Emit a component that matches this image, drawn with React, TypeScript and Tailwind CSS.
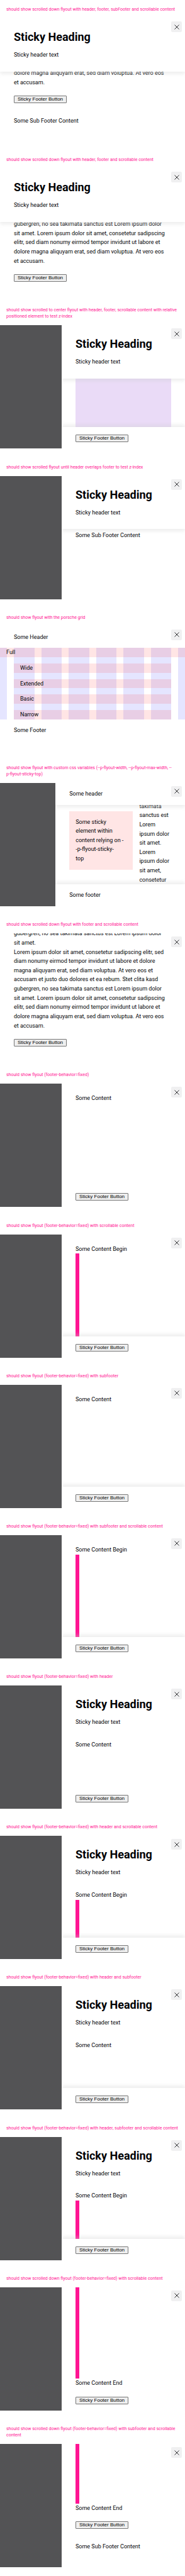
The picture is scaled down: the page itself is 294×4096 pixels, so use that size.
import type { ReactNode } from "react";
import clsx from "clsx";

type StageProps = {
  title: ReactNode;
  backdrop?: "none" | "third" | "custom";
  children: ReactNode;
};

function CloseButton() {
  return (
    <button
      type="button"
      aria-label="Dismiss flyout"
      className="absolute top-[5px] right-[5px] z-20 flex size-[17px] items-center justify-center rounded-[2px] bg-[#f0f0f1]"
    >
      <svg viewBox="0 0 8 8" className="size-2" fill="none" stroke="#010205" strokeWidth="0.8">
        <path d="M0.5 0.5 7.5 7.5M7.5 0.5 0.5 7.5" />
      </svg>
    </button>
  );
}

function Stage({ title, backdrop = "third", children }: StageProps) {
  return (
    <section className="pb-3.5">
      <h2 className="px-2.5 pt-2.5 pb-[9px] text-[7px] leading-[10px] whitespace-nowrap text-[#ff1493]">{title}</h2>
      <div className="flex h-49 overflow-hidden">
        {backdrop !== "none" && (
          <div className={clsx("shrink-0 bg-[#535355]", backdrop === "third" ? "w-1/3" : "w-3/10")} />
        )}
        <aside className="relative flex min-w-0 flex-1 flex-col overflow-hidden bg-white">
          <CloseButton />
          {children}
        </aside>
      </div>
    </section>
  );
}

function StickyHeader({ shadow = false }: { shadow?: boolean }) {
  return (
    <header
      className={clsx(
        "z-10 flex shrink-0 flex-col gap-2.5 bg-white px-[22px] py-[19px]",
        shadow && "shadow-[0_3px_6px_rgba(204,204,204,0.4)]",
      )}
    >
      <h3 className="text-[18px] leading-[22px] font-bold">Sticky Heading</h3>
      <p>Sticky header text</p>
    </header>
  );
}

function TextBar({ children, shadow = "none" }: { children: ReactNode; shadow?: "none" | "down" | "up" }) {
  return (
    <div
      className={clsx(
        "z-10 shrink-0 bg-white px-[22px] py-2.5",
        shadow === "down" && "shadow-[0_3px_6px_rgba(204,204,204,0.4)]",
        shadow === "up" && "shadow-[0_-3px_6px_rgba(204,204,204,0.4)]",
      )}
    >
      {children}
    </div>
  );
}

function StickyFooter({ shadow = false }: { shadow?: boolean }) {
  return (
    <footer
      className={clsx(
        "z-10 flex shrink-0 bg-white px-[22px] pt-3 pb-2.5",
        shadow && "shadow-[0_-3px_6px_rgba(204,204,204,0.4)]",
      )}
    >
      <button
        type="button"
        className="rounded-[1px] border border-[#767676] bg-[#efefef] px-[5px] font-['Liberation_Sans',Arial,sans-serif] text-[8px] leading-[10px] text-black"
      >
        Sticky Footer Button
      </button>
    </footer>
  );
}

function SubFooter() {
  return <div className="shrink-0 px-[22px] pt-[11px] pb-[25px]">Some Sub Footer Content</div>;
}

function ScrolledText({ lines }: { lines: string[] }) {
  return (
    <div className="flex min-h-0 flex-1 flex-col justify-end overflow-hidden px-[22px] pb-0.5 whitespace-nowrap">
      {lines.map((line, i) => (
        <p key={i}>{line}</p>
      ))}
    </div>
  );
}

function ContentBegin({ padded = false, bar = false }: { padded?: boolean; bar?: boolean }) {
  return (
    <div className={clsx("flex min-h-0 flex-1 flex-col px-[22px]", padded ? "pt-4" : "pt-0.5")}>
      <p>{bar ? "Some Content Begin" : "Some Content"}</p>
      {bar && <div className="w-1.5 flex-1 bg-[#ff1493]" />}
    </div>
  );
}

function ContentEnd() {
  return (
    <div className="flex min-h-0 flex-1 flex-col px-[22px] pb-0.5">
      <div className="w-1.5 flex-1 bg-[#ff1493]" />
      <p>Some Content End</p>
    </div>
  );
}

const lorem = [
  "gubergren, no sea takimata sanctus est Lorem ipsum dolor",
  "sit amet.",
  "Lorem ipsum dolor sit amet, consetetur sadipscing elitr, sed",
  "diam nonumy eirmod tempor invidunt ut labore et dolore",
  "magna aliquyam erat, sed diam voluptua. At vero eos et",
  "accusam et justo duo dolores et ea rebum. Stet clita kasd",
  "gubergren, no sea takimata sanctus est Lorem ipsum dolor",
  "sit amet. Lorem ipsum dolor sit amet, consetetur sadipscing",
  "elitr, sed diam nonumy eirmod tempor invidunt ut labore et",
  "dolore magna aliquyam erat, sed diam voluptua. At vero eos",
  "et accusam.",
];

const narrowLorem = [
  "takimata",
  "sanctus est",
  "Lorem",
  "ipsum dolor",
  "sit amet.",
  "Lorem",
  "ipsum dolor",
  "sit amet,",
  "consetetur",
];

const stickyNote = ["Some sticky", "element within", "content relying on -", "-p-flyout-sticky-", "top"];

function PorscheGrid() {
  return (
    <div className="grid shrink-0">
      <div className="col-start-1 row-start-1 flex gap-[11px]">
        <div className="w-[11px] bg-[#e5e5ff]" />
        {[1, 2, 3, 4, 5, 6].map((n) => (
          <div key={n} className="flex-1 bg-[#e5e5ff]" />
        ))}
        <div className="w-[11px] bg-[#e5e5ff]" />
      </div>
      <div className="col-start-1 row-start-1 flex flex-col gap-2.5">
        <p className="bg-[#ff0000]/10 px-2.5">Full</p>
        {["Wide", "Extended", "Basic", "Narrow"].map((name) => (
          <p key={name} className="mx-[22px] bg-[#ff0000]/10 px-2.5">
            {name}
          </p>
        ))}
      </div>
    </div>
  );
}

export default function App() {
  return (
    <main className="flex min-h-screen flex-col justify-between bg-white font-[Roboto,sans-serif] text-[9px] leading-relaxed text-[#010205]">
      <Stage
        backdrop="none"
        title="should show scrolled down flyout with header, footer, subFooter and scrollable content"
      >
        <StickyHeader shadow />
        <ScrolledText lines={lorem.slice(-2)} />
        <StickyFooter />
        <SubFooter />
      </Stage>

      <Stage backdrop="none" title="should show scrolled down flyout with header, footer and scrollable content">
        <StickyHeader shadow />
        <ScrolledText lines={lorem.slice(-5)} />
        <StickyFooter />
        <div className="h-1.5 shrink-0" />
      </Stage>

      <Stage
        title={
          <>
            should show scrolled to center flyout with header, footer, scrollable content with relative
            <br />
            positioned element to test z-index
          </>
        }
      >
        <StickyHeader shadow />
        <div className="mx-[22px] flex-1 bg-[#eadbf7]" />
        <StickyFooter shadow />
      </Stage>

      <Stage title="should show scrolled flyout until header overlaps footer to test z-index">
        <StickyHeader shadow />
        <p className="px-[22px] pt-[3px]">Some Sub Footer Content</p>
      </Stage>

      <Stage backdrop="none" title="should show flyout with the porsche grid">
        <TextBar>Some Header</TextBar>
        <PorscheGrid />
        <TextBar>Some Footer</TextBar>
      </Stage>

      <Stage
        backdrop="custom"
        title={
          <>
            should show flyout with custom css variables (--p-flyout-width, --p-flyout-max-width, --
            <br />
            p-flyout-sticky-top)
          </>
        }
      >
        <TextBar shadow="down">Some header</TextBar>
        <div className="grid min-h-0 flex-1 grid-cols-[2fr_1fr] gap-2.5 px-[22px] whitespace-nowrap">
          <div className="mt-2.5 min-w-0 self-start bg-[#ffe5e5] p-2.5">
            {stickyNote.map((line) => (
              <p key={line}>{line}</p>
            ))}
          </div>
          <div className="flex min-h-0 min-w-0 flex-col justify-end">
            {narrowLorem.map((line, i) => (
              <p key={i}>{line}</p>
            ))}
          </div>
        </div>
        <TextBar shadow="up">Some footer</TextBar>
      </Stage>

      <Stage backdrop="none" title="should show scrolled down flyout with footer and scrollable content">
        <ScrolledText lines={lorem} />
        <StickyFooter />
        <div className="h-1.5 shrink-0" />
      </Stage>

      <Stage title="should show flyout (footer-behavior=fixed)">
        <ContentBegin padded />
        <StickyFooter />
      </Stage>

      <Stage title="should show flyout (footer-behavior=fixed) with scrollable content">
        <ContentBegin padded bar />
        <StickyFooter shadow />
      </Stage>

      <Stage title="should show flyout (footer-behavior=fixed) with subfooter">
        <ContentBegin padded />
        <StickyFooter shadow />
      </Stage>

      <Stage title="should show flyout (footer-behavior=fixed) with subfooter and scrollable content">
        <ContentBegin padded bar />
        <StickyFooter shadow />
      </Stage>

      <Stage title="should show flyout (footer-behavior=fixed) with header">
        <StickyHeader />
        <ContentBegin />
        <StickyFooter />
      </Stage>

      <Stage title="should show flyout (footer-behavior=fixed) with header and scrollable content">
        <StickyHeader />
        <ContentBegin bar />
        <StickyFooter shadow />
      </Stage>

      <Stage title="should show flyout (footer-behavior=fixed) with header and subfooter">
        <StickyHeader />
        <ContentBegin />
        <StickyFooter shadow />
      </Stage>

      <Stage title="should show flyout (footer-behavior=fixed) with header, subfooter and scrollable content">
        <StickyHeader />
        <ContentBegin bar />
        <StickyFooter shadow />
      </Stage>

      <Stage title="should show scrolled down flyout (footer-behavior=fixed) with scrollable content">
        <ContentEnd />
        <StickyFooter />
      </Stage>

      <Stage
        title={
          <>
            should show scrolled down flyout (footer-behavior=fixed) with subfooter and scrollable
            <br />
            content
          </>
        }
      >
        <ContentEnd />
        <StickyFooter />
        <SubFooter />
      </Stage>
    </main>
  );
}
